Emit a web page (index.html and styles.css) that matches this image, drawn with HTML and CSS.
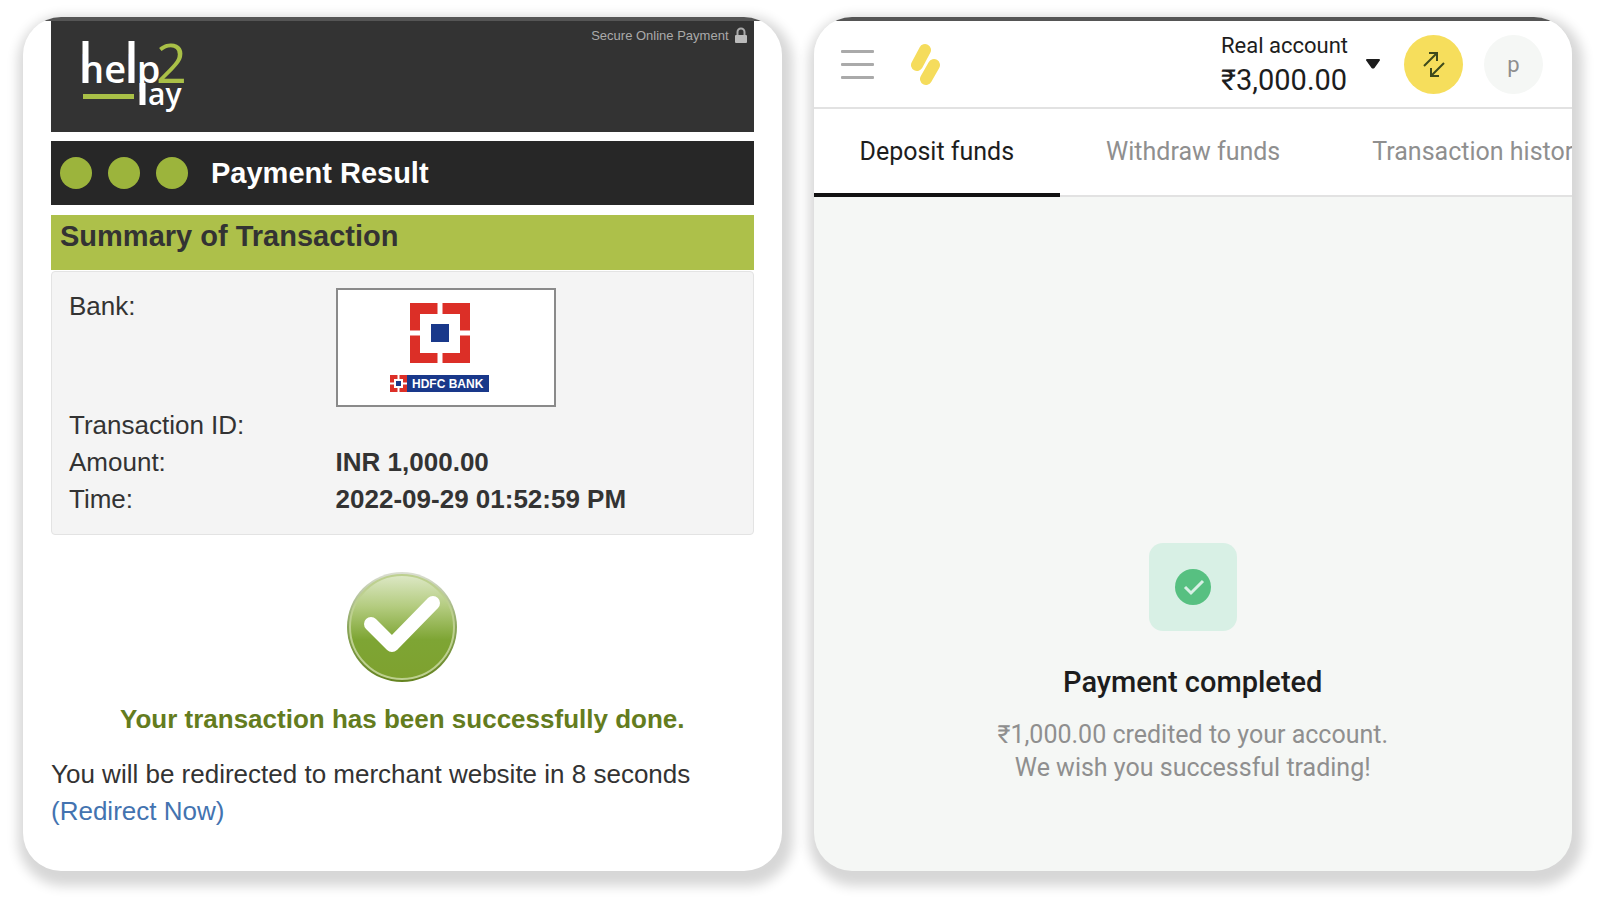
FILE: index.html
```html
<!DOCTYPE html>
<html lang="en">
<head>
<meta charset="utf-8">
<meta name="viewport" content="width=device-width, initial-scale=1">
<title>Payment completed</title>
<link rel="stylesheet" href="styles.css">
</head>
<body>
<section class="screen result">
  <header class="brand">
    <svg class="brand-logo" width="110" height="76" viewBox="0 0 110 76" role="img" aria-label="help2pay">
      <text class="brand-word" x="1" y="44">help</text>
      <text class="brand-two" x="77" y="44">2</text>
      <text class="brand-ay" x="69" y="66">ay</text>
      <path d="M6.500 2V44M52.500 2V44M63.500 44V66" stroke="#fff" stroke-width="6"/>
      <path d="M4 57.500H55" stroke="#a9c047" stroke-width="5"/>
    </svg>
    <p class="secure">Secure Online Payment
      <svg width="14" height="17" viewBox="0 0 14 17" aria-hidden="true"><path d="M3.500 9V5a3.500 3.500 0 0 1 7 0V9" fill="none" stroke="#aaa" stroke-width="2"/><rect x="1" y="8" width="12" height="8" rx="1" fill="#bbb"/></svg>
    </p>
  </header>
  <div class="steps">
    <span class="dot"></span><span class="dot"></span><span class="dot"></span>
    <h1 class="steps-title">Payment Result</h1>
  </div>
  <h2 class="summary-title">Summary of Transaction</h2>
  <dl class="summary">
    <dt>Bank:</dt>
    <dd>
      <svg class="bank" width="220" height="119" viewBox="0 0 220 119" role="img" aria-label="HDFC Bank">
        <rect x="1" y="1" width="218" height="117" fill="#fff" stroke="#8a8a8a" stroke-width="2"/>
        <path d="M74 15H134V75H74Z" fill="#dc2f27"/>
        <path d="M84 26H124V65H84Z" fill="#fff"/>
        <path d="M104 15V75M74 45H134" stroke="#fff" stroke-width="5"/>
        <path d="M95 36H113V54H95Z" fill="#19388a"/>
        <rect x="71" y="87" width="82" height="17" fill="#19388a"/>
        <path d="M54 87H71V104H54Z" fill="#dc2f27"/>
        <path d="M58 91H67V100H58Z" fill="#fff"/>
        <path d="M62.500 87V104M54 95.500H71" stroke="#fff" stroke-width="2"/>
        <path d="M60 93H65V98H60Z" fill="#19388a"/>
        <text class="bank-name" x="76" y="100">HDFC BANK</text>
      </svg>
    </dd>
    <dt>Transaction ID:</dt><dd></dd>
    <dt>Amount:</dt><dd>INR 1,000.00</dd>
    <dt>Time:</dt><dd>2022-09-29 01:52:59 PM</dd>
  </dl>
  <svg class="done" width="112" height="112" viewBox="0 0 112 112" aria-hidden="true">
    <defs>
      <linearGradient id="green" x1="0" y1="0" x2="0" y2="1"><stop offset="0" stop-color="#dde8c6"/><stop offset=".3" stop-color="#b4cc80"/><stop offset=".62" stop-color="#7ea534"/><stop offset="1" stop-color="#7ea12f"/></linearGradient>
      <linearGradient id="rim" x1="0" y1="0" x2="0" y2="1"><stop offset="0" stop-color="#dcdfd4"/><stop offset=".5" stop-color="#8aa55a"/><stop offset="1" stop-color="#64831f"/></linearGradient>
    </defs>
    <circle cx="56" cy="56" r="55" fill="url(#rim)"/>
    <circle cx="56" cy="56" r="52" fill="url(#green)" stroke="#bdd08f" stroke-width="2"/>
    <path d="M25 53L46 74L87 32" fill="none" stroke="#fff" stroke-width="14" stroke-linecap="round" stroke-linejoin="round"/>
  </svg>
  <p class="success">Your transaction has been successfully done.</p>
  <p class="redirect">You will be redirected to merchant website in 8 seconds<br><a href="#">(Redirect Now)</a></p>
</section>

<section class="screen wallet">
  <header class="topbar">
    <button class="menu" aria-label="Menu"><span></span><span></span><span></span></button>
    <svg class="mark" width="32" height="44" viewBox="0 0 32 44" role="img" aria-label="Home"><path d="M15 8L7 23M24 23L16 37" stroke="#f5dc5c" stroke-width="12" stroke-linecap="round"/></svg>
    <button class="account">
      <span class="account-text"><span class="account-type">Real account</span><span class="account-sum">₹3,000.00</span></span>
      <svg width="14" height="10" viewBox="0 0 14 10" aria-hidden="true"><path d="M1 1H13L8 8Q7 9 6 8Z" fill="#1d1d1d" stroke="#1d1d1d" stroke-width="2" stroke-linejoin="round"/></svg>
    </button>
    <button class="round swap" aria-label="Transfer">
      <svg width="24" height="28" viewBox="0 0 24 28" fill="none" stroke="#3e4a1c" stroke-width="2" aria-hidden="true"><path d="M2 16L15 3M7 3H15V11M22 13L9 26M9 18V26H17"/></svg>
    </button>
    <button class="round avatar">p</button>
  </header>
  <nav class="tabs">
    <a class="tab active" href="#">Deposit funds</a>
    <a class="tab" href="#">Withdraw funds</a>
    <a class="tab" href="#">Transaction history</a>
  </nav>
  <main class="status">
    <div class="badge">
      <svg width="38" height="38" viewBox="0 0 38 38" aria-hidden="true"><circle cx="19" cy="19" r="18" fill="#57c081"/><path d="M11 19L17 25L29 13" fill="none" stroke="#d8f0e5" stroke-width="3"/></svg>
    </div>
    <h2 class="status-title">Payment completed</h2>
    <p class="status-text">₹1,000.00 credited to your account.<br>We wish you successful trading!</p>
  </main>
</section>
</body>
</html>
```
FILE: styles.css
```css
* { box-sizing: border-box; }

body {
  margin: 0;
  min-height: 100vh;
  padding: 17px 28px 34px 23px;
  display: grid;
  grid-template-columns: minmax(0, 1fr) minmax(0, 1fr);
  gap: 32px;
  background: #fff;
}

h1, h2, p, dl, dd { margin: 0; }
a { text-decoration: none; }
button { border: 0; padding: 0; background: none; font: inherit; color: inherit; cursor: pointer; }
svg { display: block; flex: none; }

.screen {
  display: flex;
  flex-direction: column;
  overflow: hidden;
  border-radius: 38px;
  background: #fff;
  box-shadow: 3px 7px 12px 8px rgba(0, 0, 0, 0.16);
}
.screen::before { content: ""; height: 4px; flex: none; background: #555; }

/* Payment result */
.result {
  font: 26px/37px "Liberation Sans", Arial, sans-serif;
  color: #333;
}
.brand, .steps, .summary-title, .summary, .redirect { margin-left: 28px; margin-right: 28px; }
.brand {
  display: flex;
  justify-content: space-between;
  align-items: flex-start;
  height: 111px;
  padding: 18px 6px 0 28px;
  background: #333;
}
.brand-logo { overflow: visible; }
.brand-word { font: 600 38px "Open Sans", sans-serif; fill: #fff; }
.brand-two { font: 500 54px "Open Sans", sans-serif; fill: #a9c047; }
.brand-ay { font: 600 30px "Open Sans", sans-serif; fill: #fff; }
.secure {
  display: flex;
  gap: 5px;
  margin-top: -12px;
  font-size: 13px;
  line-height: 18px;
  color: #aaa;
}
.steps {
  display: flex;
  align-items: center;
  gap: 16px;
  height: 64px;
  margin-top: 9px;
  padding-left: 9px;
  background: #272727;
}
.dot { width: 32px; height: 32px; border-radius: 50%; background: #9cb43c; }
.steps-title { margin-left: 7px; font-size: 29px; line-height: 37px; color: #fff; }
.summary-title {
  height: 55px;
  margin-top: 10px;
  padding: 3px 9px;
  font-size: 29px;
  line-height: 37px;
  background: #adc04a;
}
.summary {
  display: grid;
  grid-template-columns: 40% 60%;
  margin-top: 1px;
  padding: 16px 17px;
  border: 1px solid #e3e3e3;
  border-radius: 4px;
  background: #f4f4f4;
}
.summary dd { font-weight: bold; }
.bank-name { font: bold 12px "Liberation Sans", sans-serif; fill: #fff; }
.done { margin: 36px auto 18px; }
.success { text-align: center; font-weight: bold; color: #647c1e; }
.redirect { margin-top: 18px; }
.redirect a { color: #4373b0; }

/* Trading account */
.wallet { font-family: Roboto, sans-serif; color: #1d1d1d; background: #f5f7f5; }
.topbar {
  display: flex;
  align-items: center;
  height: 88px;
  padding: 0 29px 0 27px;
  border-bottom: 2px solid #e2e2e2;
  background: #fff;
}
.menu { display: grid; gap: 10px; width: 33px; }
.menu span { height: 3px; border-radius: 1px; background: #aaa; }
.mark { margin-left: 36px; }
.account { display: flex; align-items: center; gap: 18px; margin-left: auto; text-align: left; }
.account-text { display: grid; }
.account-type { font-size: 22px; line-height: 32px; }
.account-sum { font-size: 29px; line-height: 36px; }
.round { display: grid; place-items: center; flex: none; width: 59px; height: 59px; border-radius: 50%; }
.swap { margin-left: 24px; background: #f6de5c; }
.avatar { margin-left: 21px; font-size: 22px; color: #8f8f8f; background: #f5f7f5; }
.tabs {
  display: flex;
  height: 88px;
  overflow: hidden;
  background: #fff;
  box-shadow: inset 0 -2px #e2e2e2;
}
.tab {
  flex: none;
  padding: 0 46px;
  border-bottom: 4px solid transparent;
  font-size: 25px;
  line-height: 86px;
  white-space: nowrap;
  color: #8f8f8f;
}
.tab.active { color: #1d1d1d; border-color: #111; }
.status { display: flex; flex-direction: column; align-items: center; padding: 346px 24px 24px; text-align: center; }
.badge { display: grid; place-items: center; width: 88px; height: 88px; border-radius: 14px; background: #d8f0e5; }
.status-title { margin-top: 32px; font-size: 29px; font-weight: 500; line-height: 38px; }
.status-text { margin-top: 17px; font-size: 25px; line-height: 33px; color: #8f8f8f; }
```
